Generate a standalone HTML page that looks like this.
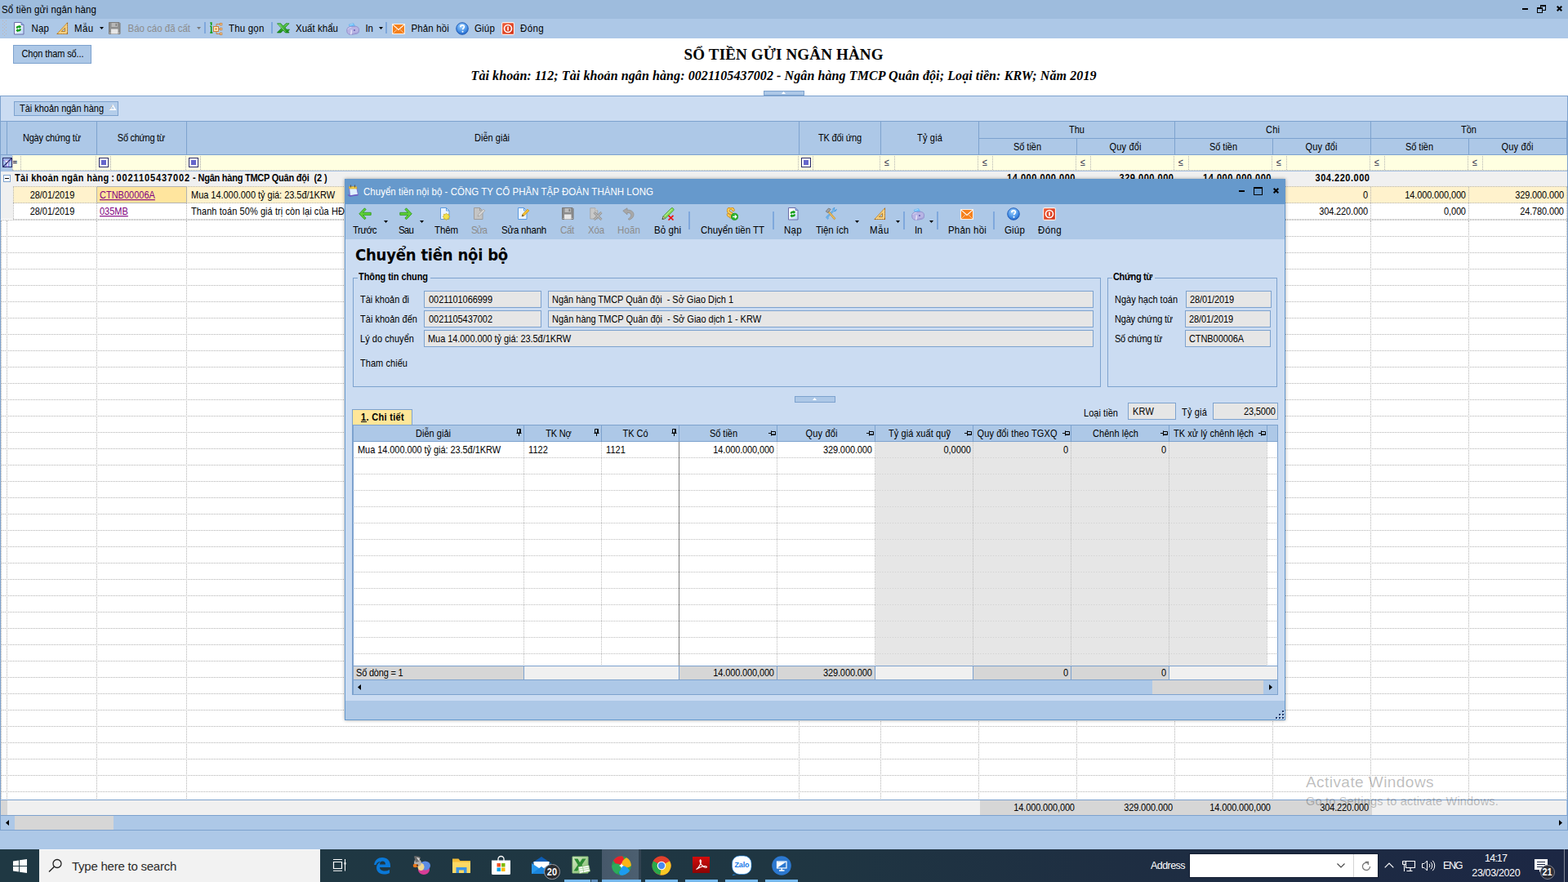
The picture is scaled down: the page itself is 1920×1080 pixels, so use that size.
<!DOCTYPE html>
<html lang="vi"><head><meta charset="utf-8"><title>Sổ tiền gửi ngân hàng</title>
<style>
*{box-sizing:border-box;margin:0;padding:0}
html,body{width:1920px;height:1080px;overflow:hidden}
body{position:relative;background:#fff;font:11px 'Liberation Sans',sans-serif;color:#000}
div,svg,span.a{position:absolute}
.hd{background:repeating-linear-gradient(to right,#b2b2b2 0 1px,transparent 1px 2px);height:1px}
.vd{background:repeating-linear-gradient(to bottom,#b2b2b2 0 1px,transparent 1px 2px);width:1px}
.hl{background:repeating-linear-gradient(to right,#bdbdbd 0 1px,#fff 1px 2px);height:1px}
.vl{background:repeating-linear-gradient(to bottom,#bdbdbd 0 1px,transparent 1px 2px);width:1px}
.m{transform:scaleY(1.12);transform-origin:0 10.8px}
.g{transform:scaleY(1.09);transform-origin:0 12px}
a{color:#800080;text-decoration:underline}
</style></head>
<body>
<div style="left:0px;top:0px;width:1920px;height:23px;background:#9ebcdd;"></div>
<div class="g" style="top:4px;font:11.5px 'Liberation Sans',sans-serif;line-height:16px;height:16px;white-space:pre;left:2px;letter-spacing:0.133px;">Sổ tiền gửi ngân hàng</div>
<div style="left:1864px;top:10px;width:7px;height:2px;background:#000;"></div>
<svg style="left:1882px;top:6px" width="11" height="10" viewBox="0 0 11 10" shape-rendering="crispEdges"><g fill="#000"><rect x="4" y="0" width="7" height="2"/><rect x="10" y="2" width="1" height="5"/><rect x="4" y="2" width="1" height="1"/><rect x="7" y="6" width="4" height="1"/><rect x="0" y="3" width="7" height="2"/><rect x="0" y="5" width="1" height="5"/><rect x="6" y="5" width="1" height="5"/><rect x="0" y="9" width="7" height="1"/></g></svg>
<svg style="left:1906px;top:7px" width="7" height="7" viewBox="0 0 7 7"><path d="M.7 .7l5.600 5.600M6.300 .7L.7 6.300" stroke="#000" stroke-width="2" stroke-linecap="butt"/></svg>
<div style="left:0px;top:23px;width:1920px;height:24px;background:#adc8e7;"></div>
<svg style="left:3px;top:25px" width="6" height="20" viewBox="0 0 6 20"><g fill="#bfb4b0"><rect x="0" y="0" width="1" height="1"/><rect x="4" y="0" width="1" height="1"/><rect x="2" y="2" width="1" height="1"/><rect x="0" y="4" width="1" height="1"/><rect x="4" y="4" width="1" height="1"/><rect x="2" y="6" width="1" height="1"/><rect x="0" y="8" width="1" height="1"/><rect x="4" y="8" width="1" height="1"/><rect x="2" y="10" width="1" height="1"/><rect x="0" y="12" width="1" height="1"/><rect x="4" y="12" width="1" height="1"/><rect x="2" y="14" width="1" height="1"/><rect x="0" y="16" width="1" height="1"/><rect x="4" y="16" width="1" height="1"/><rect x="2" y="18" width="1" height="1"/></g></svg>
<svg style="left:16px;top:27px;" width="14" height="16" viewBox="0 0 14 16"><defs><linearGradient id="rg16_27" x1="0" y1="0" x2="1" y2="1"><stop offset=".3" stop-color="#ffffff"/><stop offset="1" stop-color="#b4d4f8"/></linearGradient></defs><path d="M1.5 .5h8.500l3 3v11.500h-11.500z" fill="url(#rg16_27)" stroke="#6c6ca8"/><path d="M10 .5v3h3" fill="#7ab4f0" stroke="#6c6ca8" stroke-width=".8"/><path d="M3.600 7.400c0-2.200 2-3.300 4-2.800V3.400l2.600 2.300-2.600 2.300V6.800c-1-.2-1.800.2-1.900 1z" fill="#0c9c10"/><path d="M10 8.600c0 2.200-2 3.300-4 2.800v1.200L3.400 10.300 6 8v1.200c1 .2 1.800-.2 1.900-1z" fill="#0c9c10"/></svg>
<div class="g" style="top:27px;font:11.5px 'Liberation Sans',sans-serif;line-height:16px;height:16px;white-space:pre;left:38.5px;letter-spacing:0.13px;">Nạp</div>
<svg style="left:69px;top:27px;" width="15" height="15" viewBox="0 0 15 15"><path d="M13.500 .8v13.700H.8z" fill="#f4cc78" stroke="#c08a30" stroke-width=".9" stroke-linejoin="round"/><path d="M13.500 .8v13.700H.8" fill="none" stroke="#a87228" stroke-width="1.100"/><path d="M10.500 7.200v4.300H6.200z" fill="#adc8e7" stroke="#b07a28" stroke-width=".9"/><path d="M3.500 13v1.500M5.500 13v1.500M7.500 13v1.500M9.500 13v1.500M11.500 13v1.500M12 3.500h1.500M12 5.500h1.500M12 7.500h1.500M12 9.500h1.500M12 11.500h1.500" stroke="#fbe6b0" stroke-width=".8"/></svg>
<div class="g" style="top:27px;font:11.5px 'Liberation Sans',sans-serif;line-height:16px;height:16px;white-space:pre;left:91px;letter-spacing:0.375px;">Mẫu</div>
<svg style="left:122px;top:33px" width="5" height="3" viewBox="0 0 5 3"><path d="M0 0h5L2.5 3z" fill="#000"/></svg>
<svg style="left:133px;top:27px;" width="15" height="15" viewBox="0 0 15 15"><path d="M.5 .5h12.500l1 1v13H.5z" fill="#8e8e8e" stroke="#7a7a7a"/><rect x="3.500" y="1" width="7.500" height="5" fill="#b8b8b8"/><rect x="8.500" y="1.800" width="1.600" height="3.200" fill="#808080"/><rect x="3" y="8.500" width="8.500" height="6" fill="#e6e6e6"/><rect x="1.200" y="13" width="1" height="1" fill="#ddd"/><rect x="12.200" y="13" width="1" height="1" fill="#ddd"/></svg>
<div class="g" style="top:27px;font:11.5px 'Liberation Sans',sans-serif;line-height:16px;height:16px;white-space:pre;left:156.5px;letter-spacing:-0.017px;color:#8c8c8c;">Báo cáo đã cất</div>
<svg style="left:241px;top:33px" width="5" height="3" viewBox="0 0 5 3"><path d="M0 0h5L2.5 3z" fill="#777"/></svg>
<div style="left:250px;top:27px;width:2px;height:14px;background:#7fa8dc;"></div>
<svg style="left:257px;top:27px;" width="16" height="16" viewBox="0 0 16 16"><path d="M.3 1h2.400M1.700 1v3M.3 5.200h1.400M1.700 5v8M.2 13h3.200" stroke="#0c9c10" stroke-width="1.500" fill="none"/><rect x="4.500" y="5.500" width="6" height="6" fill="#fde8b8" stroke="#cc7a30" stroke-width=".9"/><path d="M6.200 8.500h2.600M7.500 7.200v2.600" stroke="#cc7a30" stroke-width=".9"/><path d="M10.500 8.500h2.500M8 5.500V2.500h4.500M8 11.500v3h4.500" stroke="#cc7a30" stroke-width=".9" fill="none"/><rect x="12.400" y="1.400" width="2.400" height="2.400" fill="#fde8b8" stroke="#cc7a30" stroke-width=".8"/><rect x="12.400" y="7.300" width="2.400" height="2.400" fill="#fde8b8" stroke="#cc7a30" stroke-width=".8"/><rect x="12.400" y="13.200" width="2.400" height="2.400" fill="#fde8b8" stroke="#cc7a30" stroke-width=".8"/></svg>
<div class="g" style="top:27px;font:11.5px 'Liberation Sans',sans-serif;line-height:16px;height:16px;white-space:pre;left:280px;letter-spacing:0.185px;">Thu gọn</div>
<div style="left:332px;top:27px;width:2px;height:14px;background:#7fa8dc;"></div>
<svg style="left:339px;top:28px;" width="16" height="13" viewBox="0 0 16 13"><defs><linearGradient id="xg339_28" x1="0" y1="0" x2="0" y2="1"><stop offset="0" stop-color="#6cd45c"/><stop offset="1" stop-color="#148a14"/></linearGradient></defs><path d="M.5 .8h4.300l3 3.300L11 .8h4L10 5.900l2 2.300h3.500l-1.200 1.500h-1.200l2 2.300h-4.600l-2.700-3-3 3H.4l5.300-5.600z" fill="url(#xg339_28)" stroke="#0f7a0f" stroke-width=".7" stroke-linejoin="round"/><path d="M2 1.600l9 9.600" stroke="#b8f0a8" stroke-width=".8" opacity=".8"/></svg>
<div class="g" style="top:27px;font:11.5px 'Liberation Sans',sans-serif;line-height:16px;height:16px;white-space:pre;left:362px;letter-spacing:0.023px;">Xuất khẩu</div>
<svg style="left:424px;top:28px;" width="16" height="15" viewBox="0 0 16 15"><path d="M3.200 2.200L8.600 .4l2.200 3.800-5.800 1.800z" fill="#6cc0f8" stroke="#58a8ec" stroke-width=".5"/><path d="M4.300 2.600l4-1.300" stroke="#b8e4ff" stroke-width=".8"/><path d="M.7 9c0-2.600 2.200-4.300 5-4.500l4.300-.3c3-.2 5.500 1.300 5.500 3.800v2.500c0 1.600-1.600 2.600-3.500 2.900l-5 .9c-2 .3-4.300-.2-5.300-1.500C.9 12 .7 10.500 .7 9z" fill="#b8b4e4" stroke="#8c88c8" stroke-width=".8"/><path d="M6.200 8.500c.2 2 0 4-.5 5.800" stroke="#f0eefc" stroke-width="1.200" fill="none"/><path d="M1.800 8c.8-1.600 2.500-2.500 4.500-2.700" stroke="#dcdaf4" stroke-width="1" fill="none"/><path d="M7 13.500l5-1c1.500-.3 2.700-1 2.700-2.200" stroke="#9c98d4" stroke-width=".9" fill="none"/><circle cx="10" cy="9" r=".9" fill="#5a56a8"/></svg>
<div class="g" style="top:27px;font:11.5px 'Liberation Sans',sans-serif;line-height:16px;height:16px;white-space:pre;left:447.5px;letter-spacing:-0.297px;">In</div>
<svg style="left:464px;top:33px" width="5" height="3" viewBox="0 0 5 3"><path d="M0 0h5L2.5 3z" fill="#000"/></svg>
<div style="left:472px;top:27px;width:2px;height:14px;background:#7fa8dc;"></div>
<svg style="left:480px;top:29px;" width="16" height="13" viewBox="0 0 16 13"><rect x=".5" y=".5" width="15" height="12" fill="#f5801c" stroke="#fdf0e4"/><path d="M1 1.200l7 6.200 7-6.200" stroke="#fff" stroke-width="1.100" fill="none"/><path d="M1 12l5.200-5M15 12L9.800 7" stroke="#fbc89c" stroke-width="1" fill="none"/></svg>
<div class="g" style="top:27px;font:11.5px 'Liberation Sans',sans-serif;line-height:16px;height:16px;white-space:pre;left:503.5px;letter-spacing:0.137px;">Phản hồi</div>
<svg style="left:558px;top:27px;" width="16" height="16" viewBox="0 0 16 16"><defs><radialGradient id="hg558_27" cx=".45" cy=".3" r=".75"><stop offset="0" stop-color="#a4d4ff"/><stop offset=".6" stop-color="#4a94e8"/><stop offset="1" stop-color="#1c5cc0"/></radialGradient></defs><circle cx="8" cy="8" r="7.300" fill="url(#hg558_27)" stroke="#1c58b4" stroke-width=".9"/><path d="M5.800 6.200c0-1.500 1-2.400 2.300-2.400s2.300.8 2.300 2c0 1.600-1.800 1.700-1.800 3.400" stroke="#fff" stroke-width="1.700" fill="none"/><circle cx="8.500" cy="11.700" r="1" fill="#fff"/></svg>
<div class="g" style="top:27px;font:11.5px 'Liberation Sans',sans-serif;line-height:16px;height:16px;white-space:pre;left:581px;letter-spacing:0.176px;">Giúp</div>
<svg style="left:614px;top:27px;" width="16" height="16" viewBox="0 0 16 16"><defs><linearGradient id="cg614_27" x1="0" y1="0" x2="1" y2="1"><stop offset="0" stop-color="#f0603c"/><stop offset="1" stop-color="#d02c10"/></linearGradient></defs><rect x=".6" y=".6" width="14.800" height="14.800" rx="1.500" fill="url(#cg614_27)" stroke="#fdeee8" stroke-width="1.100"/><circle cx="8" cy="8" r="4.500" fill="none" stroke="#fff" stroke-width="1.600"/><rect x="7.200" y="5.600" width="1.600" height="4.800" fill="#fff"/></svg>
<div class="g" style="top:27px;font:11.5px 'Liberation Sans',sans-serif;line-height:16px;height:16px;white-space:pre;left:637px;letter-spacing:0.375px;">Đóng</div>
<div style="left:16px;top:55px;width:96px;height:23px;background:#adc8e7;border:1px solid #7da2ce;"></div>
<div class="m" style="top:59px;font:11px 'Liberation Sans',sans-serif;line-height:14px;height:14px;white-space:pre;left:26.44px;letter-spacing:-0.11px;">Chọn tham số...</div>
<div style="top:56px;font:bold 19px 'Liberation Serif',serif;line-height:22px;height:22px;white-space:pre;left:837.58px;letter-spacing:0.157px;">SỔ TIỀN GỬI NGÂN HÀNG</div>
<div style="top:83px;font:italic bold 16px 'Liberation Serif',serif;line-height:20px;height:20px;white-space:pre;left:576.52px;letter-spacing:0.093px;">Tài khoản: 112; Tài khoản ngân hàng: 0021105437002 - Ngân hàng TMCP Quân đội; Loại tiền: KRW; Năm 2019</div>
<div style="left:935px;top:111px;width:50px;height:6px;background:#adc8e7;border:1px solid #7da2ce;"></div>
<svg style="left:957px;top:112px" width="5" height="3" viewBox="0 0 5 3"><path d="M0 3L2.500 0 5 3z" fill="#fff"/></svg>
<div style="left:0px;top:117px;width:1920px;height:31px;background:#cbdcf2;border-top:1px solid #7da2ce;"></div>
<div style="left:17px;top:124px;width:128px;height:18px;background:#b4cdea;border:1px solid #7da2ce;"></div>
<div class="m" style="top:127px;font:11px 'Liberation Sans',sans-serif;line-height:13px;height:13px;white-space:pre;left:24px;letter-spacing:-0.02px;">Tài khoản ngân hàng</div>
<svg style="left:133px;top:127px" width="10" height="9" viewBox="0 0 10 9"><path d="M5 1.800L8.300 7.200H1.700z" fill="#b9d0ec" stroke="#fff" stroke-width="1.400" stroke-linejoin="miter"/><path d="M1.300 7.200L4.700 1.600" stroke="#9a9a9a" stroke-width=".7" fill="none"/></svg>
<div style="left:0px;top:148px;width:1920px;height:42px;background:#adc8e7;"></div>
<div style="left:0px;top:148px;width:1920px;height:1px;background:#7da2ce;"></div>
<div style="left:0px;top:189px;width:1920px;height:1px;background:#7da2ce;"></div>
<div style="left:8px;top:148px;width:1px;height:42px;background:#7da2ce;"></div>
<div style="left:118px;top:148px;width:1px;height:42px;background:#7da2ce;"></div>
<div style="left:228px;top:148px;width:1px;height:42px;background:#7da2ce;"></div>
<div style="left:978px;top:148px;width:1px;height:42px;background:#7da2ce;"></div>
<div style="left:1078px;top:148px;width:1px;height:42px;background:#7da2ce;"></div>
<div style="left:1198px;top:148px;width:1px;height:42px;background:#7da2ce;"></div>
<div style="left:1438px;top:148px;width:1px;height:42px;background:#7da2ce;"></div>
<div style="left:1678px;top:148px;width:1px;height:42px;background:#7da2ce;"></div>
<div style="left:1918px;top:148px;width:1px;height:42px;background:#7da2ce;"></div>
<div style="left:1318px;top:169px;width:1px;height:21px;background:#7da2ce;"></div>
<div style="left:1558px;top:169px;width:1px;height:21px;background:#7da2ce;"></div>
<div style="left:1798px;top:169px;width:1px;height:21px;background:#7da2ce;"></div>
<div style="left:1198px;top:169px;width:722px;height:1px;background:#7da2ce;"></div>
<div class="m" style="top:162px;font:11px 'Liberation Sans',sans-serif;line-height:14px;height:14px;white-space:pre;left:27.91px;letter-spacing:-0.188px;">Ngày chứng từ</div>
<div class="m" style="top:162px;font:11px 'Liberation Sans',sans-serif;line-height:14px;height:14px;white-space:pre;left:143.86px;letter-spacing:-0.293px;">Số chứng từ</div>
<div class="m" style="top:162px;font:11px 'Liberation Sans',sans-serif;line-height:14px;height:14px;white-space:pre;left:581.01px;letter-spacing:0.021px;">Diễn giải</div>
<div class="m" style="top:162px;font:11px 'Liberation Sans',sans-serif;line-height:14px;height:14px;white-space:pre;left:1001.93px;letter-spacing:-0.145px;">TK đối ứng</div>
<div class="m" style="top:162px;font:11px 'Liberation Sans',sans-serif;line-height:14px;height:14px;white-space:pre;left:1123.09px;letter-spacing:0.172px;">Tỷ giá</div>
<div class="m" style="top:152px;font:11px 'Liberation Sans',sans-serif;line-height:14px;height:14px;white-space:pre;left:1309.01px;letter-spacing:0.01px;">Thu</div>
<div class="m" style="top:152px;font:11px 'Liberation Sans',sans-serif;line-height:14px;height:14px;white-space:pre;left:1550.08px;letter-spacing:0.161px;">Chi</div>
<div class="m" style="top:152px;font:11px 'Liberation Sans',sans-serif;line-height:14px;height:14px;white-space:pre;left:1789.01px;letter-spacing:0.01px;">Tồn</div>
<div class="m" style="top:173px;font:11px 'Liberation Sans',sans-serif;line-height:14px;height:14px;white-space:pre;left:1240.98px;letter-spacing:-0.036px;">Số tiền</div>
<div class="m" style="top:173px;font:11px 'Liberation Sans',sans-serif;line-height:14px;height:14px;white-space:pre;left:1480.98px;letter-spacing:-0.036px;">Số tiền</div>
<div class="m" style="top:173px;font:11px 'Liberation Sans',sans-serif;line-height:14px;height:14px;white-space:pre;left:1720.98px;letter-spacing:-0.036px;">Số tiền</div>
<div class="m" style="top:173px;font:11px 'Liberation Sans',sans-serif;line-height:14px;height:14px;white-space:pre;left:1358.58px;letter-spacing:0.154px;">Quy đổi</div>
<div class="m" style="top:173px;font:11px 'Liberation Sans',sans-serif;line-height:14px;height:14px;white-space:pre;left:1598.58px;letter-spacing:0.154px;">Quy đổi</div>
<div class="m" style="top:173px;font:11px 'Liberation Sans',sans-serif;line-height:14px;height:14px;white-space:pre;left:1838.58px;letter-spacing:0.154px;">Quy đổi</div>
<div style="left:0px;top:190px;width:1920px;height:19px;background:#ffffe1;"></div>
<div style="left:0px;top:190px;width:15px;height:19px;background:#adc8e7;"></div>
<svg style="left:3px;top:193px" width="12" height="12" viewBox="0 0 12 12"><rect x=".5" y=".5" width="11" height="11" fill="#a8c8f0" stroke="#2a2a6a"/><path d="M1.500 3h9L7.300 6.800V11h-2.300V6.800z" fill="#fff" stroke="#7a6ad8" stroke-width=".9"/><path d="M1 11L11 1" stroke="#2a2a6a" stroke-width="1.300"/></svg>
<div style="top:193px;font:bold 9.5px 'Liberation Sans',sans-serif;line-height:12px;height:12px;white-space:pre;left:15.5px;color:#10103a;">=</div>
<div class="vd" style="left:25px;top:191px;height:18px;background-position:0 0px"></div>
<div class="vd" style="left:117px;top:191px;height:18px;background-position:0 0px"></div>
<div class="vd" style="left:135px;top:191px;height:18px;background-position:0 0px"></div>
<div class="vd" style="left:227px;top:191px;height:18px;background-position:0 0px"></div>
<div class="vd" style="left:245px;top:191px;height:18px;background-position:0 0px"></div>
<div class="vd" style="left:977px;top:191px;height:18px;background-position:0 0px"></div>
<div class="vd" style="left:995px;top:191px;height:18px;background-position:0 0px"></div>
<div class="vd" style="left:1077px;top:191px;height:18px;background-position:0 0px"></div>
<div class="vd" style="left:1095px;top:191px;height:18px;background-position:0 0px"></div>
<div class="vd" style="left:1197px;top:191px;height:18px;background-position:0 0px"></div>
<div class="vd" style="left:1215px;top:191px;height:18px;background-position:0 0px"></div>
<div class="vd" style="left:1317px;top:191px;height:18px;background-position:0 0px"></div>
<div class="vd" style="left:1335px;top:191px;height:18px;background-position:0 0px"></div>
<div class="vd" style="left:1437px;top:191px;height:18px;background-position:0 0px"></div>
<div class="vd" style="left:1455px;top:191px;height:18px;background-position:0 0px"></div>
<div class="vd" style="left:1557px;top:191px;height:18px;background-position:0 0px"></div>
<div class="vd" style="left:1575px;top:191px;height:18px;background-position:0 0px"></div>
<div class="vd" style="left:1677px;top:191px;height:18px;background-position:0 0px"></div>
<div class="vd" style="left:1695px;top:191px;height:18px;background-position:0 0px"></div>
<div class="vd" style="left:1797px;top:191px;height:18px;background-position:0 0px"></div>
<div class="vd" style="left:1815px;top:191px;height:18px;background-position:0 0px"></div>
<svg style="left:121px;top:193px" width="12" height="12" viewBox="0 0 12 12"><rect x=".5" y=".5" width="11" height="11" fill="#fff" stroke="#2a2a6a"/><rect x="3" y="3" width="6" height="6" fill="#6666cc"/></svg>
<svg style="left:231px;top:193px" width="12" height="12" viewBox="0 0 12 12"><rect x=".5" y=".5" width="11" height="11" fill="#fff" stroke="#2a2a6a"/><rect x="3" y="3" width="6" height="6" fill="#6666cc"/></svg>
<svg style="left:981px;top:193px" width="12" height="12" viewBox="0 0 12 12"><rect x=".5" y=".5" width="11" height="11" fill="#fff" stroke="#2a2a6a"/><rect x="3" y="3" width="6" height="6" fill="#6666cc"/></svg>
<div class="m" style="top:192px;font:11px 'Liberation Sans',sans-serif;line-height:14px;height:14px;white-space:pre;left:1083px;color:#1a1a3a;">≤</div>
<div class="m" style="top:192px;font:11px 'Liberation Sans',sans-serif;line-height:14px;height:14px;white-space:pre;left:1203px;color:#1a1a3a;">≤</div>
<div class="m" style="top:192px;font:11px 'Liberation Sans',sans-serif;line-height:14px;height:14px;white-space:pre;left:1323px;color:#1a1a3a;">≤</div>
<div class="m" style="top:192px;font:11px 'Liberation Sans',sans-serif;line-height:14px;height:14px;white-space:pre;left:1443px;color:#1a1a3a;">≤</div>
<div class="m" style="top:192px;font:11px 'Liberation Sans',sans-serif;line-height:14px;height:14px;white-space:pre;left:1563px;color:#1a1a3a;">≤</div>
<div class="m" style="top:192px;font:11px 'Liberation Sans',sans-serif;line-height:14px;height:14px;white-space:pre;left:1683px;color:#1a1a3a;">≤</div>
<div class="m" style="top:192px;font:11px 'Liberation Sans',sans-serif;line-height:14px;height:14px;white-space:pre;left:1803px;color:#1a1a3a;">≤</div>
<div class="hd" style="left:15px;top:208px;width:1905px;background-position:1px 0"></div>
<div class="vd" style="left:15px;top:191px;height:18px;background-position:0 0px"></div>
<div style="left:0px;top:209px;width:1920px;height:1px;background:#a9c1e2;"></div>
<div style="left:0px;top:210px;width:1920px;height:870px;background:#fff;"></div>
<div style="left:0px;top:210px;width:1920px;height:18px;background:#f0f0f0;"></div>
<div style="left:0px;top:228px;width:16px;height:40px;background:#f0f0f0;"></div>
<svg style="left:4px;top:214px" width="9" height="9" viewBox="0 0 9 9"><rect x=".5" y=".5" width="8" height="8" fill="#fff" stroke="#7da2ce"/><path d="M2 4.500h5" stroke="#000"/></svg>
<div style="left:18px;top:211px;font:bold 11px 'Liberation Sans',sans-serif;line-height:14px;height:14px;white-space:pre;transform:scaleY(1.12);transform-origin:0 10.8px;"><span style="letter-spacing:0.294px">Tài khoản ngân hàng</span><span style="letter-spacing:-0.294px"> : </span><span style="letter-spacing:0.889px">0021105437002</span><span style="letter-spacing:-0.094px"> - </span><span style="letter-spacing:-0.243px">Ngân hàng TMCP Quân đội</span><span style="letter-spacing:-0.062px">  </span><span style="letter-spacing:-0.125px">(2 )</span></div>
<div class="m" style="top:211px;font:bold 11px 'Liberation Sans',sans-serif;line-height:14px;height:14px;white-space:pre;left:1233.04px;letter-spacing:0.538px;">14.000.000,000</div>
<div class="m" style="top:211px;font:bold 11px 'Liberation Sans',sans-serif;line-height:14px;height:14px;white-space:pre;left:1370.53px;letter-spacing:0.53px;">329.000.000</div>
<div class="m" style="top:211px;font:bold 11px 'Liberation Sans',sans-serif;line-height:14px;height:14px;white-space:pre;left:1473.04px;letter-spacing:0.538px;">14.000.000,000</div>
<div class="m" style="top:211px;font:bold 11px 'Liberation Sans',sans-serif;line-height:14px;height:14px;white-space:pre;left:1610.53px;letter-spacing:0.53px;">304.220.000</div>
<div style="left:16px;top:228px;width:1904px;height:21px;background:#fff2cc;"></div>
<div style="left:118px;top:228px;width:111px;height:21px;background:#ffe59e;border:1px solid #b4b4b4;"></div>
<div class="hd" style="left:16px;top:228px;width:1904px;background-position:0px 0"></div>
<div class="hd" style="left:16px;top:248px;width:1904px;background-position:0px 0"></div>
<div class="hd" style="left:16px;top:268px;width:1904px;background-position:0px 0"></div>
<div class="vd" style="left:16px;top:228px;height:41px;background-position:0 1px"></div>
<div class="vd" style="left:118px;top:228px;height:41px;background-position:0 1px"></div>
<div class="vd" style="left:228px;top:228px;height:41px;background-position:0 1px"></div>
<div class="vd" style="left:978px;top:228px;height:41px;background-position:0 1px"></div>
<div class="vd" style="left:1078px;top:228px;height:41px;background-position:0 1px"></div>
<div class="vd" style="left:1198px;top:228px;height:41px;background-position:0 1px"></div>
<div class="vd" style="left:1318px;top:228px;height:41px;background-position:0 1px"></div>
<div class="vd" style="left:1438px;top:228px;height:41px;background-position:0 1px"></div>
<div class="vd" style="left:1558px;top:228px;height:41px;background-position:0 1px"></div>
<div class="vd" style="left:1678px;top:228px;height:41px;background-position:0 1px"></div>
<div class="vd" style="left:1798px;top:228px;height:41px;background-position:0 1px"></div>
<div class="vd" style="left:1918px;top:228px;height:41px;background-position:0 1px"></div>
<div class="hd" style="left:1px;top:269px;width:1918px;background-position:1px 0"></div>
<div class="hd" style="left:1px;top:289px;width:1918px;background-position:1px 0"></div>
<div class="hd" style="left:1px;top:309px;width:1918px;background-position:1px 0"></div>
<div class="hd" style="left:1px;top:329px;width:1918px;background-position:1px 0"></div>
<div class="hd" style="left:1px;top:349px;width:1918px;background-position:1px 0"></div>
<div class="hd" style="left:1px;top:369px;width:1918px;background-position:1px 0"></div>
<div class="hd" style="left:1px;top:389px;width:1918px;background-position:1px 0"></div>
<div class="hd" style="left:1px;top:409px;width:1918px;background-position:1px 0"></div>
<div class="hd" style="left:1px;top:429px;width:1918px;background-position:1px 0"></div>
<div class="hd" style="left:1px;top:449px;width:1918px;background-position:1px 0"></div>
<div class="hd" style="left:1px;top:469px;width:1918px;background-position:1px 0"></div>
<div class="hd" style="left:1px;top:489px;width:1918px;background-position:1px 0"></div>
<div class="hd" style="left:1px;top:509px;width:1918px;background-position:1px 0"></div>
<div class="hd" style="left:1px;top:529px;width:1918px;background-position:1px 0"></div>
<div class="hd" style="left:1px;top:549px;width:1918px;background-position:1px 0"></div>
<div class="hd" style="left:1px;top:569px;width:1918px;background-position:1px 0"></div>
<div class="hd" style="left:1px;top:589px;width:1918px;background-position:1px 0"></div>
<div class="hd" style="left:1px;top:609px;width:1918px;background-position:1px 0"></div>
<div class="hd" style="left:1px;top:629px;width:1918px;background-position:1px 0"></div>
<div class="hd" style="left:1px;top:649px;width:1918px;background-position:1px 0"></div>
<div class="hd" style="left:1px;top:669px;width:1918px;background-position:1px 0"></div>
<div class="hd" style="left:1px;top:689px;width:1918px;background-position:1px 0"></div>
<div class="hd" style="left:1px;top:709px;width:1918px;background-position:1px 0"></div>
<div class="hd" style="left:1px;top:729px;width:1918px;background-position:1px 0"></div>
<div class="hd" style="left:1px;top:749px;width:1918px;background-position:1px 0"></div>
<div class="hd" style="left:1px;top:769px;width:1918px;background-position:1px 0"></div>
<div class="hd" style="left:1px;top:789px;width:1918px;background-position:1px 0"></div>
<div class="hd" style="left:1px;top:809px;width:1918px;background-position:1px 0"></div>
<div class="hd" style="left:1px;top:829px;width:1918px;background-position:1px 0"></div>
<div class="hd" style="left:1px;top:849px;width:1918px;background-position:1px 0"></div>
<div class="hd" style="left:1px;top:869px;width:1918px;background-position:1px 0"></div>
<div class="hd" style="left:1px;top:889px;width:1918px;background-position:1px 0"></div>
<div class="hd" style="left:1px;top:909px;width:1918px;background-position:1px 0"></div>
<div class="hd" style="left:1px;top:929px;width:1918px;background-position:1px 0"></div>
<div class="hd" style="left:1px;top:949px;width:1918px;background-position:1px 0"></div>
<div class="hd" style="left:1px;top:969px;width:1918px;background-position:1px 0"></div>
<div class="vd" style="left:1px;top:270px;height:709px;background-position:0 1px"></div>
<div class="vd" style="left:8px;top:270px;height:709px;background-position:0 1px"></div>
<div class="vd" style="left:118px;top:270px;height:709px;background-position:0 1px"></div>
<div class="vd" style="left:228px;top:270px;height:709px;background-position:0 1px"></div>
<div class="vd" style="left:978px;top:270px;height:709px;background-position:0 1px"></div>
<div class="vd" style="left:1078px;top:270px;height:709px;background-position:0 1px"></div>
<div class="vd" style="left:1198px;top:270px;height:709px;background-position:0 1px"></div>
<div class="vd" style="left:1318px;top:270px;height:709px;background-position:0 1px"></div>
<div class="vd" style="left:1438px;top:270px;height:709px;background-position:0 1px"></div>
<div class="vd" style="left:1558px;top:270px;height:709px;background-position:0 1px"></div>
<div class="vd" style="left:1678px;top:270px;height:709px;background-position:0 1px"></div>
<div class="vd" style="left:1798px;top:270px;height:709px;background-position:0 1px"></div>
<div class="vd" style="left:1918px;top:270px;height:709px;background-position:0 1px"></div>
<div class="m" style="top:232px;font:11px 'Liberation Sans',sans-serif;line-height:14px;height:14px;white-space:pre;left:36.72px;letter-spacing:-0.056px;">28/01/2019</div>
<a class="m" style="position:absolute;left:122px;top:232px;line-height:14px;height:14px;white-space:pre;letter-spacing:0px">CTNB00006A</a>
<div class="m" style="top:232px;font:11px 'Liberation Sans',sans-serif;line-height:14px;height:14px;white-space:pre;left:234px;letter-spacing:-0.035px;">Mua 14.000.000 tỷ giá: 23.5đ/1KRW</div>
<div class="m" style="top:232px;font:11px 'Liberation Sans',sans-serif;line-height:14px;height:14px;white-space:pre;left:1668.88px;">0</div>
<div class="m" style="top:232px;font:11px 'Liberation Sans',sans-serif;line-height:14px;height:14px;white-space:pre;left:1720.31px;letter-spacing:-0.137px;">14.000.000,000</div>
<div class="m" style="top:232px;font:11px 'Liberation Sans',sans-serif;line-height:14px;height:14px;white-space:pre;left:1855.22px;letter-spacing:-0.139px;">329.000.000</div>
<div class="m" style="top:252px;font:11px 'Liberation Sans',sans-serif;line-height:14px;height:14px;white-space:pre;left:36.72px;letter-spacing:-0.056px;">28/01/2019</div>
<a class="m" style="position:absolute;left:122px;top:252px;line-height:14px;height:14px;white-space:pre;letter-spacing:0px">035MB</a>
<div class="m" style="top:252px;font:11px 'Liberation Sans',sans-serif;line-height:14px;height:14px;white-space:pre;left:234px;letter-spacing:0.073px;">Thanh toán 50% giá trị còn lại của HĐ</div>
<div class="m" style="top:252px;font:11px 'Liberation Sans',sans-serif;line-height:14px;height:14px;white-space:pre;left:1615.22px;letter-spacing:-0.139px;">304.220.000</div>
<div class="m" style="top:252px;font:11px 'Liberation Sans',sans-serif;line-height:14px;height:14px;white-space:pre;left:1768.02px;letter-spacing:-0.138px;">0,000</div>
<div class="m" style="top:252px;font:11px 'Liberation Sans',sans-serif;line-height:14px;height:14px;white-space:pre;left:1861.18px;letter-spacing:-0.138px;">24.780.000</div>
<div style="left:0px;top:979px;width:1920px;height:20px;background:#f0f0f0;border:1px solid #7da2ce;"></div>
<div style="left:1px;top:980px;width:8px;height:18px;background:#d6d6d6;"></div>
<div style="left:1200px;top:980px;width:480px;height:18px;background:#d6d6d6;"></div>
<div style="left:1918px;top:980px;width:1px;height:18px;background:#adc8e7;"></div>
<div class="m" style="top:982px;font:11px 'Liberation Sans',sans-serif;line-height:14px;height:14px;white-space:pre;left:1241.31px;letter-spacing:-0.137px;">14.000.000,000</div>
<div class="m" style="top:982px;font:11px 'Liberation Sans',sans-serif;line-height:14px;height:14px;white-space:pre;left:1376.22px;letter-spacing:-0.139px;">329.000.000</div>
<div class="m" style="top:982px;font:11px 'Liberation Sans',sans-serif;line-height:14px;height:14px;white-space:pre;left:1481.31px;letter-spacing:-0.137px;">14.000.000,000</div>
<div class="m" style="top:982px;font:11px 'Liberation Sans',sans-serif;line-height:14px;height:14px;white-space:pre;left:1616.22px;letter-spacing:-0.139px;">304.220.000</div>
<div style="left:0px;top:999px;width:1920px;height:18px;background:#adc8e7;border:1px solid #7da2ce;border-top:0;"></div>
<div style="left:18px;top:999px;width:121px;height:17px;background:#d6d6d6;"></div>
<svg style="left:7px;top:1004px" width="4" height="7" viewBox="0 0 4 7"><path d="M4 0v7L0 3.5z" fill="#000"/></svg>
<svg style="left:1909px;top:1004px" width="4" height="7" viewBox="0 0 4 7"><path d="M0 0v7l4-3.5z" fill="#000"/></svg>
<div style="left:0px;top:1017px;width:1920px;height:23px;background:#adc8e7;"></div>
<div style="left:0px;top:117px;width:1px;height:900px;background:#7da2ce;"></div>
<div style="left:1919px;top:117px;width:1px;height:900px;background:#7da2ce;"></div>
<div style="top:946px;font:19px 'Liberation Sans',sans-serif;line-height:24px;height:24px;white-space:pre;left:1599px;letter-spacing:0.44px;color:rgba(0,0,0,.27);">Activate Windows</div>
<div style="top:972px;font:14.5px 'Liberation Sans',sans-serif;line-height:18px;height:18px;white-space:pre;left:1599px;letter-spacing:0.203px;color:rgba(0,0,0,.25);">Go to Settings to activate Windows.</div>
<div style="left:422px;top:219px;width:1152px;height:663px;background:#cbdcf2;box-shadow:0 0 4px rgba(0,0,0,.35);"></div>
<div style="left:422px;top:219px;width:1152px;height:31px;background:#6699cc;"></div>
<div style="left:422px;top:219px;width:1px;height:663px;background:#6699cc;"></div>
<div style="left:1573px;top:219px;width:1px;height:663px;background:#6699cc;"></div>
<div style="left:422px;top:881px;width:1152px;height:1px;background:#6699cc;"></div>
<svg style="left:425px;top:225px;" width="14" height="16" viewBox="0 0 14 16"><path d="M2.500 3.500h9l2 10-10 1.500z" fill="#dff0ff" stroke="#7a6ac8" stroke-width=".9"/><path d="M2.500 3.500h9l.5 2.500H2.700z" fill="#f4d24a" stroke="#c8a020" stroke-width=".6"/><path d="M1 13.500l2.500 1.500 10-1.500" fill="none" stroke="#6a5ac0" stroke-width="1.400"/><path d="M4.500 1.500v3M9.500 1.500v3" stroke="#555" stroke-width="1.100"/></svg>
<div class="g" style="top:227px;font:11.5px 'Liberation Sans',sans-serif;line-height:16px;height:16px;white-space:pre;left:445px;letter-spacing:0.024px;color:#fff;">Chuyển tiền nội bộ - CÔNG TY CỔ PHẦN TẬP ĐOÀN THÀNH LONG</div>
<div style="left:1517px;top:233px;width:7px;height:2px;background:#000;"></div>
<svg style="left:1535px;top:229px" width="11" height="10" viewBox="0 0 11 10" shape-rendering="crispEdges"><g fill="#000"><rect x="0" y="0" width="11" height="2"/><rect x="0" y="2" width="1" height="8"/><rect x="10" y="2" width="1" height="8"/><rect x="0" y="9" width="11" height="1"/></g></svg>
<svg style="left:1559px;top:230px" width="7" height="7" viewBox="0 0 7 7"><path d="M.7 .7l5.600 5.600M6.300 .7L.7 6.300" stroke="#000" stroke-width="2" stroke-linecap="butt"/></svg>
<div style="left:423px;top:250px;width:1150px;height:43px;background:#adc8e7;"></div>
<svg style="left:439px;top:254px;" width="16" height="16" viewBox="0 0 16 16"><path d="M7.500 .8L.8 7.800l6.700 7 1.600-1.800-3.700-3.700h9.800v-3H5.400l3.700-3.700z" fill="#5fd03a" stroke="#2f9a1a" stroke-width=".9" stroke-linejoin="round"/></svg>
<div class="g" style="top:274px;font:11.5px 'Liberation Sans',sans-serif;line-height:16px;height:16px;white-space:pre;left:432px;letter-spacing:-0.484px;">Trước</div>
<svg style="left:470px;top:270px" width="5" height="3" viewBox="0 0 5 3"><path d="M0 0h5L2.5 3z" fill="#000"/></svg>
<svg style="left:489px;top:254px;" width="16" height="16" viewBox="0 0 16 16"><path d="M8.500 .8l6.700 7-6.700 7-1.600-1.800 3.700-3.700H.8v-3h9.800L6.900 2.600z" fill="#5fd03a" stroke="#2f9a1a" stroke-width=".9" stroke-linejoin="round"/></svg>
<div class="g" style="top:274px;font:11.5px 'Liberation Sans',sans-serif;line-height:16px;height:16px;white-space:pre;left:488px;letter-spacing:-0.823px;">Sau</div>
<svg style="left:514px;top:270px" width="5" height="3" viewBox="0 0 5 3"><path d="M0 0h5L2.5 3z" fill="#000"/></svg>
<svg style="left:538px;top:254px;" width="16" height="16" viewBox="0 0 16 16"><path d="M1.5 .5h7l3.500 3.500v10.500h-10.500z" fill="#eaf3ff" stroke="#5a9ae0"/><path d="M8.500 .5v3.500h3.500" fill="none" stroke="#5a9ae0"/><path d="M8.500 7l1.200 1.700 2-.5-.4 2 1.700 1.100-1.700 1.100.4 2-2-.5L8.500 15.600 7.300 13.900l-2 .5.4-2L4 11.300l1.700-1.100-.4-2 2 .5z" fill="#f2e24a" stroke="#c8a820" stroke-width=".7"/></svg>
<div class="g" style="top:274px;font:11.5px 'Liberation Sans',sans-serif;line-height:16px;height:16px;white-space:pre;left:532px;letter-spacing:-0.102px;">Thêm</div>
<svg style="left:579px;top:254px;" width="16" height="16" viewBox="0 0 16 16"><path d="M1.5 .5h7l3.500 3.500v10.500h-10.500z" fill="#c4c4c4" stroke="#9c9c9c"/><path d="M8.500 .5v3.500h3.500" fill="none" stroke="#9c9c9c"/><path d="M6 11l.8-2.600 6.200-6.200 1.800 1.800-6.200 6.200z" fill="#d8d8d8" stroke="#a0a0a0" stroke-width=".8"/></svg>
<div class="g" style="top:274px;font:11.5px 'Liberation Sans',sans-serif;line-height:16px;height:16px;white-space:pre;left:577px;letter-spacing:-0.922px;color:#8c8c8c;">Sửa</div>
<svg style="left:633px;top:254px;" width="16" height="16" viewBox="0 0 16 16"><path d="M1.5 .5h7l3.500 3.500v10.500h-10.500z" fill="#eaf3ff" stroke="#5a9ae0"/><path d="M8.500 .5v3.500h3.500" fill="none" stroke="#5a9ae0"/><path d="M6 11l.8-2.600 6.200-6.200 1.800 1.800-6.200 6.200z" fill="#f6c432" stroke="#c8901a" stroke-width=".8"/><path d="M6 11l.8-2.600 1.800 1.800z" fill="#5a4a3a"/></svg>
<div class="g" style="top:274px;font:11.5px 'Liberation Sans',sans-serif;line-height:16px;height:16px;white-space:pre;left:614px;letter-spacing:-0.217px;">Sửa nhanh</div>
<svg style="left:688px;top:254px;" width="15" height="15" viewBox="0 0 15 15"><path d="M.5 .5h12.500l1 1v13H.5z" fill="#8c8c8c" stroke="#787878"/><rect x="3.500" y="1" width="7.500" height="5" fill="#bcbcbc"/><rect x="8.500" y="1.800" width="1.600" height="3.200" fill="#7c7c7c"/><rect x="3" y="8.500" width="8.500" height="6" fill="#e8e8e8"/><rect x="1.200" y="13" width="1" height="1" fill="#ddd"/><rect x="12.200" y="13" width="1" height="1" fill="#ddd"/></svg>
<div class="g" style="top:274px;font:11.5px 'Liberation Sans',sans-serif;line-height:16px;height:16px;white-space:pre;left:686px;letter-spacing:-0.302px;color:#8c8c8c;">Cất</div>
<svg style="left:722px;top:254px;" width="16" height="16" viewBox="0 0 16 16"><path d="M.8 .8h6l3 3V14H.8z" fill="#c8c8c8" stroke="#a4a4a4" stroke-width=".9"/><path d="M6.800 .8v3h3" fill="#dcdcdc" stroke="#a4a4a4" stroke-width=".8"/><path d="M5.500 6l9 9M14.500 6l-9 9" stroke="#8c8c8c" stroke-width="2.800"/><path d="M5.500 6l9 9M14.500 6l-9 9" stroke="#b8b8b8" stroke-width="1.400"/></svg>
<div class="g" style="top:274px;font:11.5px 'Liberation Sans',sans-serif;line-height:16px;height:16px;white-space:pre;left:720px;letter-spacing:-0.156px;color:#8c8c8c;">Xóa</div>
<svg style="left:762px;top:254px;" width="15" height="16" viewBox="0 0 15 16"><path d="M.8 4.200L6 .8v2.400c4.500-.4 8 1.800 8 5.600 0 3-2.400 5.200-5.400 6.400-.8-.2-1.200-.6-1.400-1.200 2-1 3.400-2.600 3.400-4.600 0-2-1.600-3.200-4.600-3v2.400z" fill="#a8a8a8" stroke="#909090" stroke-width=".8" stroke-linejoin="round"/></svg>
<div class="g" style="top:274px;font:11.5px 'Liberation Sans',sans-serif;line-height:16px;height:16px;white-space:pre;left:756px;letter-spacing:0.125px;color:#8c8c8c;">Hoãn</div>
<svg style="left:810px;top:254px;" width="16" height="16" viewBox="0 0 16 16"><path d="M1 14.500l1.200-3.800L12 .9c.6-.6 1.500-.5 2.100.1l.6.700c.5.600.5 1.400-.1 2L4.800 13.500z" fill="#8cdc5c" stroke="#3c9c24" stroke-width=".9" stroke-linejoin="round"/><path d="M3.200 11.200l9-9" stroke="#c4f4a4" stroke-width="1"/><path d="M1 14.500l1.200-3.800 2.600 2.800z" fill="#e8d4a8" stroke="#5c5c3c" stroke-width=".7"/><path d="M1 14.500l.5-1.500 1 1z" fill="#222"/><path d="M8.500 9.800l6 5.700M14.500 9.800l-6 5.700" stroke="#f01010" stroke-width="1.700"/></svg>
<div class="g" style="top:274px;font:11.5px 'Liberation Sans',sans-serif;line-height:16px;height:16px;white-space:pre;left:801px;letter-spacing:0.065px;">Bỏ ghi</div>
<div style="left:843px;top:259px;width:2px;height:22px;background:#7fa8dc;"></div>
<svg style="left:889px;top:254px;" width="15" height="16" viewBox="0 0 15 16"><path d="M9 3.200C8.300 1.600 6.800 1 5.300 1.200 3.500 1.500 2.400 2.800 2.600 4.300c.2 1.500 1.500 2.100 3 2.600 1.300.4 2 1 2 2 0 1.100-.9 1.800-2.200 1.800S3 10 2.500 8.800" fill="none" stroke="#c88414" stroke-width="3.400" stroke-linecap="round"/><path d="M9 3.200C8.300 1.600 6.800 1 5.300 1.200 3.500 1.500 2.400 2.800 2.600 4.300c.2 1.500 1.500 2.100 3 2.600 1.300.4 2 1 2 2 0 1.100-.9 1.800-2.200 1.800S3 10 2.500 8.800" fill="none" stroke="#fbd05c" stroke-width="2" stroke-linecap="round"/><path d="M5.500 0v2M5.500 11v2.500" stroke="#c88414" stroke-width="1.800"/><path d="M5.500 .3v1.500M5.500 11.300v1.800" stroke="#fbd05c" stroke-width=".9"/><circle cx="10.500" cy="11.300" r="4.100" fill="#2cb42c" stroke="#158a15" stroke-width=".7"/><path d="M8.200 11.300h4M10.800 9.400l1.900 1.900-1.900 1.900" stroke="#fff" stroke-width="1.300" fill="none"/></svg>
<div class="g" style="top:274px;font:11.5px 'Liberation Sans',sans-serif;line-height:16px;height:16px;white-space:pre;left:858px;letter-spacing:-0.03px;">Chuyển tiền TT</div>
<div style="left:946px;top:259px;width:2px;height:22px;background:#7fa8dc;"></div>
<svg style="left:964px;top:254px;" width="14" height="16" viewBox="0 0 14 16"><defs><linearGradient id="rg964_254" x1="0" y1="0" x2="1" y2="1"><stop offset=".3" stop-color="#ffffff"/><stop offset="1" stop-color="#b4d4f8"/></linearGradient></defs><path d="M1.5 .5h8.500l3 3v11.500h-11.500z" fill="url(#rg964_254)" stroke="#6c6ca8"/><path d="M10 .5v3h3" fill="#7ab4f0" stroke="#6c6ca8" stroke-width=".8"/><path d="M3.600 7.400c0-2.200 2-3.300 4-2.800V3.400l2.600 2.300-2.600 2.300V6.800c-1-.2-1.800.2-1.900 1z" fill="#0c9c10"/><path d="M10 8.600c0 2.200-2 3.300-4 2.800v1.200L3.400 10.300 6 8v1.200c1 .2 1.800-.2 1.900-1z" fill="#0c9c10"/></svg>
<div class="g" style="top:274px;font:11.5px 'Liberation Sans',sans-serif;line-height:16px;height:16px;white-space:pre;left:960px;letter-spacing:0.297px;">Nạp</div>
<svg style="left:1010px;top:254px;" width="16" height="16" viewBox="0 0 16 16"><path d="M2.500 13.500c-.8-.8-.8-1.700 0-2.500L10 3.500c-.5-1.500.3-3 2-3.300l-1 1.800 1.500 1.500 1.800-1c-.3 1.700-1.800 2.500-3.300 2L3.500 12c.8.800.8 1.700 0 2.500" fill="#8cc8f4" stroke="#3c94dc" stroke-width=".9" stroke-linejoin="round"/><path d="M5.500 5l7.500 8.500-1.500 1.300L4.200 6.200z" fill="#f0c060" stroke="#b8882c" stroke-width=".7"/><path d="M1.200 4.800L4.600 1l2.600 1.300L3.600 6.400z" fill="#a4a4a4" stroke="#6c6c6c" stroke-width=".8" stroke-linejoin="round"/></svg>
<div class="g" style="top:274px;font:11.5px 'Liberation Sans',sans-serif;line-height:16px;height:16px;white-space:pre;left:999px;letter-spacing:-0.061px;">Tiện ích</div>
<svg style="left:1047px;top:270px" width="5" height="3" viewBox="0 0 5 3"><path d="M0 0h5L2.5 3z" fill="#000"/></svg>
<svg style="left:1070px;top:254px;" width="15" height="15" viewBox="0 0 15 15"><path d="M13.500 .8v13.700H.8z" fill="#f4cc78" stroke="#c08a30" stroke-width=".9" stroke-linejoin="round"/><path d="M13.500 .8v13.700H.8" fill="none" stroke="#a87228" stroke-width="1.100"/><path d="M10.500 7.200v4.300H6.200z" fill="#adc8e7" stroke="#b07a28" stroke-width=".9"/><path d="M3.500 13v1.500M5.500 13v1.500M7.500 13v1.500M9.500 13v1.500M11.500 13v1.500M12 3.500h1.500M12 5.500h1.500M12 7.500h1.500M12 9.500h1.500M12 11.500h1.500" stroke="#fbe6b0" stroke-width=".8"/></svg>
<div class="g" style="top:274px;font:11.5px 'Liberation Sans',sans-serif;line-height:16px;height:16px;white-space:pre;left:1065px;letter-spacing:0.542px;">Mẫu</div>
<svg style="left:1097px;top:270px" width="5" height="3" viewBox="0 0 5 3"><path d="M0 0h5L2.5 3z" fill="#000"/></svg>
<div style="left:1106px;top:259px;width:2px;height:22px;background:#7fa8dc;"></div>
<svg style="left:1116px;top:255px;" width="16" height="15" viewBox="0 0 16 15"><path d="M3.200 2.200L8.600 .4l2.200 3.800-5.800 1.800z" fill="#6cc0f8" stroke="#58a8ec" stroke-width=".5"/><path d="M4.300 2.600l4-1.300" stroke="#b8e4ff" stroke-width=".8"/><path d="M.7 9c0-2.600 2.200-4.300 5-4.500l4.300-.3c3-.2 5.500 1.300 5.500 3.800v2.500c0 1.600-1.600 2.600-3.500 2.900l-5 .9c-2 .3-4.300-.2-5.300-1.500C.9 12 .7 10.500 .7 9z" fill="#b8b4e4" stroke="#8c88c8" stroke-width=".8"/><path d="M6.200 8.500c.2 2 0 4-.5 5.800" stroke="#f0eefc" stroke-width="1.200" fill="none"/><path d="M1.800 8c.8-1.600 2.500-2.500 4.500-2.700" stroke="#dcdaf4" stroke-width="1" fill="none"/><path d="M7 13.500l5-1c1.500-.3 2.700-1 2.700-2.200" stroke="#9c98d4" stroke-width=".9" fill="none"/><circle cx="10" cy="9" r=".9" fill="#5a56a8"/></svg>
<div class="g" style="top:274px;font:11.5px 'Liberation Sans',sans-serif;line-height:16px;height:16px;white-space:pre;left:1120px;letter-spacing:-0.297px;">In</div>
<svg style="left:1138px;top:270px" width="5" height="3" viewBox="0 0 5 3"><path d="M0 0h5L2.5 3z" fill="#000"/></svg>
<div style="left:1147px;top:259px;width:2px;height:22px;background:#7fa8dc;"></div>
<svg style="left:1176px;top:256px;" width="16" height="13" viewBox="0 0 16 13"><rect x=".5" y=".5" width="15" height="12" fill="#f5801c" stroke="#fdf0e4"/><path d="M1 1.200l7 6.200 7-6.200" stroke="#fff" stroke-width="1.100" fill="none"/><path d="M1 12l5.200-5M15 12L9.800 7" stroke="#fbc89c" stroke-width="1" fill="none"/></svg>
<div class="g" style="top:274px;font:11.5px 'Liberation Sans',sans-serif;line-height:16px;height:16px;white-space:pre;left:1161px;letter-spacing:0.199px;">Phản hồi</div>
<div style="left:1216px;top:259px;width:2px;height:22px;background:#7fa8dc;"></div>
<svg style="left:1233px;top:254px;" width="16" height="16" viewBox="0 0 16 16"><defs><radialGradient id="hg1233_254" cx=".45" cy=".3" r=".75"><stop offset="0" stop-color="#a4d4ff"/><stop offset=".6" stop-color="#4a94e8"/><stop offset="1" stop-color="#1c5cc0"/></radialGradient></defs><circle cx="8" cy="8" r="7.300" fill="url(#hg1233_254)" stroke="#1c58b4" stroke-width=".9"/><path d="M5.800 6.200c0-1.500 1-2.400 2.300-2.400s2.300.8 2.300 2c0 1.600-1.800 1.700-1.800 3.400" stroke="#fff" stroke-width="1.700" fill="none"/><circle cx="8.500" cy="11.700" r="1" fill="#fff"/></svg>
<div class="g" style="top:274px;font:11.5px 'Liberation Sans',sans-serif;line-height:16px;height:16px;white-space:pre;left:1230px;letter-spacing:0.176px;">Giúp</div>
<svg style="left:1277px;top:254px;" width="16" height="16" viewBox="0 0 16 16"><defs><linearGradient id="cg1277_254" x1="0" y1="0" x2="1" y2="1"><stop offset="0" stop-color="#f0603c"/><stop offset="1" stop-color="#d02c10"/></linearGradient></defs><rect x=".6" y=".6" width="14.800" height="14.800" rx="1.500" fill="url(#cg1277_254)" stroke="#fdeee8" stroke-width="1.100"/><circle cx="8" cy="8" r="4.500" fill="none" stroke="#fff" stroke-width="1.600"/><rect x="7.200" y="5.600" width="1.600" height="4.800" fill="#fff"/></svg>
<div class="g" style="top:274px;font:11.5px 'Liberation Sans',sans-serif;line-height:16px;height:16px;white-space:pre;left:1271px;letter-spacing:0.375px;">Đóng</div>
<div style="top:298px;font:bold 20px 'DejaVu Sans Condensed','DejaVu Sans','Liberation Sans',sans-serif;line-height:28px;height:28px;white-space:pre;left:435px;letter-spacing:-0.207px;">Chuyển tiền nội bộ</div>
<div style="left:432px;top:340px;width:916px;height:134px;border:1px solid #7da2ce;"></div>
<div style="left:438px;top:334px;width:89px;height:12px;background:#cbdcf2;"></div>
<div class="m" style="top:332px;font:bold 11px 'Liberation Sans',sans-serif;line-height:14px;height:14px;white-space:pre;left:439px;letter-spacing:-0.077px;">Thông tin chung</div>
<div style="left:1356px;top:340px;width:208px;height:134px;border:1px solid #7da2ce;"></div>
<div style="left:1362px;top:334px;width:52px;height:12px;background:#cbdcf2;"></div>
<div class="m" style="top:332px;font:bold 11px 'Liberation Sans',sans-serif;line-height:14px;height:14px;white-space:pre;left:1363px;letter-spacing:-0.346px;">Chứng từ</div>
<div class="m" style="top:360px;font:11px 'Liberation Sans',sans-serif;line-height:14px;height:14px;white-space:pre;left:441px;letter-spacing:0.005px;">Tài khoản đi</div>
<div class="m" style="top:384px;font:11px 'Liberation Sans',sans-serif;line-height:14px;height:14px;white-space:pre;left:441px;letter-spacing:0.022px;">Tài khoản đến</div>
<div class="m" style="top:408px;font:11px 'Liberation Sans',sans-serif;line-height:14px;height:14px;white-space:pre;left:441px;letter-spacing:0.047px;">Lý do chuyển</div>
<div class="m" style="top:438px;font:11px 'Liberation Sans',sans-serif;line-height:14px;height:14px;white-space:pre;left:441px;letter-spacing:0.052px;">Tham chiếu</div>
<div style="left:519px;top:356px;width:144px;height:21px;background:#e6e6e6;border:1px solid #7da2ce;"></div>
<div class="m" style="top:360px;font:11px 'Liberation Sans',sans-serif;line-height:14px;height:14px;white-space:pre;left:525px;letter-spacing:-0.055px;">0021101066999</div>
<div style="left:519px;top:380px;width:144px;height:21px;background:#e6e6e6;border:1px solid #7da2ce;"></div>
<div class="m" style="top:384px;font:11px 'Liberation Sans',sans-serif;line-height:14px;height:14px;white-space:pre;left:525px;letter-spacing:-0.055px;">0021105437002</div>
<div style="left:671px;top:356px;width:668px;height:21px;background:#e6e6e6;border:1px solid #7da2ce;"></div>
<div class="m" style="top:360px;font:11px 'Liberation Sans',sans-serif;line-height:14px;height:14px;white-space:pre;left:676px;letter-spacing:-0.031px;">Ngân hàng TMCP Quân đội  - Sở Giao Dịch 1</div>
<div style="left:671px;top:380px;width:668px;height:21px;background:#e6e6e6;border:1px solid #7da2ce;"></div>
<div class="m" style="top:384px;font:11px 'Liberation Sans',sans-serif;line-height:14px;height:14px;white-space:pre;left:676px;letter-spacing:-0.014px;">Ngân hàng TMCP Quân đội  - Sở Giao dịch 1 - KRW</div>
<div style="left:519px;top:404px;width:820px;height:21px;background:#e6e6e6;border:1px solid #7da2ce;"></div>
<div class="m" style="top:408px;font:11px 'Liberation Sans',sans-serif;line-height:14px;height:14px;white-space:pre;left:524px;letter-spacing:-0.065px;">Mua 14.000.000 tỷ giá: 23.5đ/1KRW</div>
<div class="m" style="top:360px;font:11px 'Liberation Sans',sans-serif;line-height:14px;height:14px;white-space:pre;left:1365px;letter-spacing:-0.004px;">Ngày hạch toán</div>
<div class="m" style="top:384px;font:11px 'Liberation Sans',sans-serif;line-height:14px;height:14px;white-space:pre;left:1365px;letter-spacing:-0.188px;">Ngày chứng từ</div>
<div class="m" style="top:408px;font:11px 'Liberation Sans',sans-serif;line-height:14px;height:14px;white-space:pre;left:1365px;letter-spacing:-0.293px;">Số chứng từ</div>
<div style="left:1452px;top:356px;width:105px;height:21px;background:#e6e6e6;border:1px solid #7da2ce;"></div>
<div class="m" style="top:360px;font:11px 'Liberation Sans',sans-serif;line-height:14px;height:14px;white-space:pre;left:1457px;letter-spacing:-0.106px;">28/01/2019</div>
<div style="left:1451px;top:380px;width:105px;height:21px;background:#e6e6e6;border:1px solid #7da2ce;"></div>
<div class="m" style="top:384px;font:11px 'Liberation Sans',sans-serif;line-height:14px;height:14px;white-space:pre;left:1456px;letter-spacing:-0.106px;">28/01/2019</div>
<div style="left:1451px;top:404px;width:105px;height:21px;background:#e6e6e6;border:1px solid #7da2ce;"></div>
<div class="m" style="top:408px;font:11px 'Liberation Sans',sans-serif;line-height:14px;height:14px;white-space:pre;left:1456px;letter-spacing:-0.087px;">CTNB00006A</div>
<div style="left:973px;top:485px;width:50px;height:8px;background:#adc8e7;border:1px solid #7da2ce;"></div>
<svg style="left:995px;top:487px" width="5" height="3" viewBox="0 0 5 3"><path d="M0 3L2.500 0 5 3z" fill="#fff"/></svg>
<div style="left:431px;top:501px;width:74px;height:20px;background:#ffe699;border:1px solid #7da2ce;border-bottom:0;"></div>
<div class="m" style="top:504px;font:bold 11px 'Liberation Sans',sans-serif;line-height:14px;height:14px;white-space:pre;left:442px;letter-spacing:0.317px;">1. Chi tiết</div>
<div style="left:442px;top:516px;width:7px;height:1px;background:#000;"></div>
<div class="m" style="top:499px;font:11px 'Liberation Sans',sans-serif;line-height:14px;height:14px;white-space:pre;left:1327px;letter-spacing:0.045px;">Loại tiền</div>
<div style="left:1381px;top:493px;width:59px;height:21px;background:#e6e6e6;border:1px solid #7da2ce;"></div>
<div class="m" style="top:497px;font:11px 'Liberation Sans',sans-serif;line-height:14px;height:14px;white-space:pre;left:1387px;letter-spacing:0.177px;">KRW</div>
<div class="m" style="top:498px;font:11px 'Liberation Sans',sans-serif;line-height:14px;height:14px;white-space:pre;left:1447px;letter-spacing:0.172px;">Tỷ giá</div>
<div style="left:1485px;top:493px;width:80px;height:21px;background:#e6e6e6;border:1px solid #7da2ce;"></div>
<div class="m" style="top:497px;font:11px 'Liberation Sans',sans-serif;line-height:14px;height:14px;white-space:pre;left:1522.89px;letter-spacing:-0.109px;">23,5000</div>
<div style="left:431px;top:520px;width:1134px;height:331px;background:#fff;border:1px solid #7da2ce;border-left-width:2px;"></div>
<div style="left:433px;top:521px;width:1131px;height:19px;background:#adc8e7;"></div>
<div style="left:432px;top:540px;width:1133px;height:1px;background:#7da2ce;"></div>
<div style="left:641px;top:521px;width:1px;height:20px;background:#7da2ce;"></div>
<div style="left:736px;top:521px;width:1px;height:20px;background:#7da2ce;"></div>
<div style="left:831px;top:521px;width:1px;height:20px;background:#7da2ce;"></div>
<div style="left:951px;top:521px;width:1px;height:20px;background:#7da2ce;"></div>
<div style="left:1071px;top:521px;width:1px;height:20px;background:#7da2ce;"></div>
<div style="left:1191px;top:521px;width:1px;height:20px;background:#7da2ce;"></div>
<div style="left:1311px;top:521px;width:1px;height:20px;background:#7da2ce;"></div>
<div style="left:1431px;top:521px;width:1px;height:20px;background:#7da2ce;"></div>
<div style="left:1551px;top:521px;width:1px;height:20px;background:#7da2ce;"></div>
<div style="left:1072px;top:541px;width:479px;height:274px;background:#e6e6e6;"></div>
<div class="m" style="top:524px;font:11px 'Liberation Sans',sans-serif;line-height:14px;height:14px;white-space:pre;left:509.01px;letter-spacing:0.021px;">Diễn giải</div>
<div class="m" style="top:524px;font:11px 'Liberation Sans',sans-serif;line-height:14px;height:14px;white-space:pre;left:668.37px;letter-spacing:-0.256px;">TK Nợ</div>
<div class="m" style="top:524px;font:11px 'Liberation Sans',sans-serif;line-height:14px;height:14px;white-space:pre;left:762.48px;letter-spacing:-0.037px;">TK Có</div>
<div class="m" style="top:524px;font:11px 'Liberation Sans',sans-serif;line-height:14px;height:14px;white-space:pre;left:868.98px;letter-spacing:-0.036px;">Số tiền</div>
<div class="m" style="top:524px;font:11px 'Liberation Sans',sans-serif;line-height:14px;height:14px;white-space:pre;left:986.58px;letter-spacing:0.154px;">Quy đổi</div>
<div class="m" style="top:524px;font:11px 'Liberation Sans',sans-serif;line-height:14px;height:14px;white-space:pre;left:1088.05px;letter-spacing:0.094px;">Tỷ giá xuất quỹ</div>
<div class="m" style="top:524px;font:11px 'Liberation Sans',sans-serif;line-height:14px;height:14px;white-space:pre;left:1196.54px;letter-spacing:0.094px;">Quy đổi theo TGXQ</div>
<div class="m" style="top:524px;font:11px 'Liberation Sans',sans-serif;line-height:14px;height:14px;white-space:pre;left:1338.02px;letter-spacing:0.034px;">Chênh lệch</div>
<div class="m" style="top:524px;font:11px 'Liberation Sans',sans-serif;line-height:14px;height:14px;white-space:pre;left:1437.02px;letter-spacing:0.039px;">TK xử lý chênh lệch</div>
<svg style="left:632px;top:525px" width="7" height="9" viewBox="0 0 7 9"><path d="M1.500 .5h4v4.500h-4zM.5 5.500h6M3.500 5.500v3.500" fill="none" stroke="#000"/><path d="M4.500 1v4" stroke="#000"/></svg>
<svg style="left:727px;top:525px" width="7" height="9" viewBox="0 0 7 9"><path d="M1.500 .5h4v4.500h-4zM.5 5.500h6M3.500 5.500v3.500" fill="none" stroke="#000"/><path d="M4.500 1v4" stroke="#000"/></svg>
<svg style="left:822px;top:525px" width="7" height="9" viewBox="0 0 7 9"><path d="M1.500 .5h4v4.500h-4zM.5 5.500h6M3.500 5.500v3.500" fill="none" stroke="#000"/><path d="M4.500 1v4" stroke="#000"/></svg>
<svg style="left:941px;top:527px" width="9" height="7" viewBox="0 0 9 7"><path d="M3.500 1.500h5v4h-5zM3.500 .5v6M0 3.500h3.500" fill="none" stroke="#000"/><path d="M4 5h4.500" stroke="#000"/></svg>
<svg style="left:1061px;top:527px" width="9" height="7" viewBox="0 0 9 7"><path d="M3.500 1.500h5v4h-5zM3.500 .5v6M0 3.500h3.500" fill="none" stroke="#000"/><path d="M4 5h4.500" stroke="#000"/></svg>
<svg style="left:1181px;top:527px" width="9" height="7" viewBox="0 0 9 7"><path d="M3.500 1.500h5v4h-5zM3.500 .5v6M0 3.500h3.500" fill="none" stroke="#000"/><path d="M4 5h4.500" stroke="#000"/></svg>
<svg style="left:1301px;top:527px" width="9" height="7" viewBox="0 0 9 7"><path d="M3.500 1.500h5v4h-5zM3.500 .5v6M0 3.500h3.500" fill="none" stroke="#000"/><path d="M4 5h4.500" stroke="#000"/></svg>
<svg style="left:1421px;top:527px" width="9" height="7" viewBox="0 0 9 7"><path d="M3.500 1.500h5v4h-5zM3.500 .5v6M0 3.500h3.500" fill="none" stroke="#000"/><path d="M4 5h4.500" stroke="#000"/></svg>
<svg style="left:1541px;top:527px" width="9" height="7" viewBox="0 0 9 7"><path d="M3.500 1.500h5v4h-5zM3.500 .5v6M0 3.500h3.500" fill="none" stroke="#000"/><path d="M4 5h4.500" stroke="#000"/></svg>
<div class="hl" style="left:433px;top:560px;width:1118px;background-position:1px 0"></div>
<div class="hl" style="left:1552px;top:560px;width:12px;background-position:0px 0"></div>
<div class="hl" style="left:433px;top:580px;width:1118px;background-position:1px 0"></div>
<div class="hl" style="left:1552px;top:580px;width:12px;background-position:0px 0"></div>
<div class="hl" style="left:433px;top:600px;width:1118px;background-position:1px 0"></div>
<div class="hl" style="left:1552px;top:600px;width:12px;background-position:0px 0"></div>
<div class="hl" style="left:433px;top:620px;width:1118px;background-position:1px 0"></div>
<div class="hl" style="left:1552px;top:620px;width:12px;background-position:0px 0"></div>
<div class="hl" style="left:433px;top:640px;width:1118px;background-position:1px 0"></div>
<div class="hl" style="left:1552px;top:640px;width:12px;background-position:0px 0"></div>
<div class="hl" style="left:433px;top:660px;width:1118px;background-position:1px 0"></div>
<div class="hl" style="left:1552px;top:660px;width:12px;background-position:0px 0"></div>
<div class="hl" style="left:433px;top:680px;width:1118px;background-position:1px 0"></div>
<div class="hl" style="left:1552px;top:680px;width:12px;background-position:0px 0"></div>
<div class="hl" style="left:433px;top:700px;width:1118px;background-position:1px 0"></div>
<div class="hl" style="left:1552px;top:700px;width:12px;background-position:0px 0"></div>
<div class="hl" style="left:433px;top:720px;width:1118px;background-position:1px 0"></div>
<div class="hl" style="left:1552px;top:720px;width:12px;background-position:0px 0"></div>
<div class="hl" style="left:433px;top:740px;width:1118px;background-position:1px 0"></div>
<div class="hl" style="left:1552px;top:740px;width:12px;background-position:0px 0"></div>
<div class="hl" style="left:433px;top:760px;width:1118px;background-position:1px 0"></div>
<div class="hl" style="left:1552px;top:760px;width:12px;background-position:0px 0"></div>
<div class="hl" style="left:433px;top:780px;width:1118px;background-position:1px 0"></div>
<div class="hl" style="left:1552px;top:780px;width:12px;background-position:0px 0"></div>
<div class="hl" style="left:433px;top:800px;width:1118px;background-position:1px 0"></div>
<div class="hl" style="left:1552px;top:800px;width:12px;background-position:0px 0"></div>
<div class="vl" style="left:641px;top:541px;height:274px;background-position:0 0px"></div>
<div class="vl" style="left:736px;top:541px;height:274px;background-position:0 0px"></div>
<div style="left:831px;top:541px;width:1px;height:274px;background:#808080;"></div>
<div class="vl" style="left:951px;top:541px;height:274px;background-position:0 0px"></div>
<div class="vl" style="left:1071px;top:541px;height:274px;background-position:0 0px"></div>
<div class="vl" style="left:1191px;top:541px;height:274px;background-position:0 0px"></div>
<div class="vl" style="left:1311px;top:541px;height:274px;background-position:0 0px"></div>
<div class="vl" style="left:1431px;top:541px;height:274px;background-position:0 0px"></div>
<div class="vl" style="left:1551px;top:541px;height:274px;background-position:0 0px"></div>
<div class="m" style="top:544px;font:11px 'Liberation Sans',sans-serif;line-height:14px;height:14px;white-space:pre;left:438px;letter-spacing:-0.065px;">Mua 14.000.000 tỷ giá: 23.5đ/1KRW</div>
<div class="m" style="top:544px;font:11px 'Liberation Sans',sans-serif;line-height:14px;height:14px;white-space:pre;left:647px;letter-spacing:0.086px;">1122</div>
<div class="m" style="top:544px;font:11px 'Liberation Sans',sans-serif;line-height:14px;height:14px;white-space:pre;left:742px;letter-spacing:0.086px;">1121</div>
<div class="m" style="top:544px;font:11px 'Liberation Sans',sans-serif;line-height:14px;height:14px;white-space:pre;left:873.36px;letter-spacing:-0.141px;">14.000.000,000</div>
<div class="m" style="top:544px;font:11px 'Liberation Sans',sans-serif;line-height:14px;height:14px;white-space:pre;left:1007.90px;letter-spacing:-0.107px;">329.000.000</div>
<div class="m" style="top:544px;font:11px 'Liberation Sans',sans-serif;line-height:14px;height:14px;white-space:pre;left:1155.47px;letter-spacing:-0.026px;">0,0000</div>
<div class="m" style="top:544px;font:11px 'Liberation Sans',sans-serif;line-height:14px;height:14px;white-space:pre;left:1301.88px;">0</div>
<div class="m" style="top:544px;font:11px 'Liberation Sans',sans-serif;line-height:14px;height:14px;white-space:pre;left:1421.88px;">0</div>
<div style="left:433px;top:815px;width:1131px;height:18px;background:#f0f0f0;border-top:1px solid #7da2ce;border-bottom:1px solid #7da2ce;"></div>
<div style="left:433px;top:816px;width:208px;height:16px;background:#d6d6d6;"></div>
<div style="left:832px;top:816px;width:119px;height:16px;background:#d6d6d6;"></div>
<div style="left:952px;top:816px;width:119px;height:16px;background:#d6d6d6;"></div>
<div style="left:1192px;top:816px;width:119px;height:16px;background:#d6d6d6;"></div>
<div style="left:1312px;top:816px;width:119px;height:16px;background:#d6d6d6;"></div>
<div style="left:641px;top:816px;width:1px;height:16px;background:#7da2ce;"></div>
<div style="left:831px;top:816px;width:1px;height:16px;background:#7da2ce;"></div>
<div style="left:951px;top:816px;width:1px;height:16px;background:#7da2ce;"></div>
<div style="left:1071px;top:816px;width:1px;height:16px;background:#7da2ce;"></div>
<div style="left:1191px;top:816px;width:1px;height:16px;background:#7da2ce;"></div>
<div style="left:1311px;top:816px;width:1px;height:16px;background:#7da2ce;"></div>
<div style="left:1431px;top:816px;width:1px;height:16px;background:#7da2ce;"></div>
<div class="m" style="top:817px;font:11px 'Liberation Sans',sans-serif;line-height:14px;height:14px;white-space:pre;left:436px;letter-spacing:-0.195px;">Số dòng = 1</div>
<div class="m" style="top:817px;font:11px 'Liberation Sans',sans-serif;line-height:14px;height:14px;white-space:pre;left:873.36px;letter-spacing:-0.141px;">14.000.000,000</div>
<div class="m" style="top:817px;font:11px 'Liberation Sans',sans-serif;line-height:14px;height:14px;white-space:pre;left:1007.90px;letter-spacing:-0.107px;">329.000.000</div>
<div class="m" style="top:817px;font:11px 'Liberation Sans',sans-serif;line-height:14px;height:14px;white-space:pre;left:1301.88px;">0</div>
<div class="m" style="top:817px;font:11px 'Liberation Sans',sans-serif;line-height:14px;height:14px;white-space:pre;left:1421.88px;">0</div>
<div style="left:433px;top:833px;width:1131px;height:17px;background:#adc8e7;"></div>
<div style="left:1411px;top:833px;width:136px;height:17px;background:#d6d6d6;"></div>
<svg style="left:438px;top:838px" width="4" height="7" viewBox="0 0 4 7"><path d="M4 0v7L0 3.500z" fill="#000"/></svg>
<svg style="left:1554px;top:838px" width="4" height="7" viewBox="0 0 4 7"><path d="M0 0v7l4-3.500z" fill="#000"/></svg>
<div style="left:423px;top:858px;width:1150px;height:23px;background:#adc8e7;"></div>
<svg style="left:1562px;top:870px" width="12" height="12" viewBox="0 0 12 12"><g fill="#dce8f8"><rect x="9" y="9" width="2" height="2"/><rect x="9" y="5" width="2" height="2"/><rect x="9" y="1" width="2" height="2"/><rect x="5" y="9" width="2" height="2"/><rect x="5" y="5" width="2" height="2"/><rect x="1" y="9" width="2" height="2"/></g><g fill="#223a6a"><rect x="8" y="8" width="2" height="2"/><rect x="8" y="4" width="2" height="2"/><rect x="8" y="0" width="2" height="2"/><rect x="4" y="8" width="2" height="2"/><rect x="4" y="4" width="2" height="2"/><rect x="0" y="8" width="2" height="2"/></g></svg>
<div style="left:0px;top:1040px;width:1920px;height:40px;background:linear-gradient(to right,#1f3843 0,#1f3642 50%,#1e2d42 74%,#1c2744 100%);"></div>
<svg style="left:16px;top:1052px" width="17" height="17" viewBox="0 0 17 17"><path d="M0 2.400L7 1.400V8H0zM8 1.200L17 0v8H8zM0 9h7v6.600L0 14.600zM8 9h9v8l-9-1.200z" fill="#fff"/></svg>
<div style="left:48px;top:1040px;width:344px;height:40px;background:#f2f2f2;border-top:1px solid #fbfbfb;"></div>
<svg style="left:59px;top:1051px" width="18" height="18" viewBox="0 0 18 18"><circle cx="11" cy="6.500" r="5" fill="none" stroke="#222" stroke-width="1.300"/><path d="M7.400 10.200L1 16.600" stroke="#222" stroke-width="1.400"/></svg>
<div style="top:1051px;font:15px 'Liberation Sans',sans-serif;line-height:20px;height:20px;white-space:pre;left:88px;letter-spacing:-0.241px;color:#2b2b2b;">Type here to search</div>
<div style="top:1052px;font:12.5px 'Liberation Sans',sans-serif;line-height:16px;height:16px;white-space:pre;left:1409px;letter-spacing:-0.551px;color:#fff;">Address</div>
<div style="left:1456px;top:1045px;width:232px;height:30px;background:#121c30;"></div>
<div style="left:1457px;top:1046px;width:230px;height:28px;background:#fff;"></div>
<div style="left:1657px;top:1046px;width:1px;height:28px;background:#d4d4d4;"></div>
<svg style="left:1637px;top:1057px" width="10" height="6" viewBox="0 0 10 6"><path d="M.5 .5L5 5 9.500 .5" fill="none" stroke="#444" stroke-width="1.100"/></svg>
<svg style="left:1667px;top:1054px" width="12" height="13" viewBox="0 0 12 13"><path d="M8.300 2.900A4.600 4.600 0 1 0 10.600 7" fill="none" stroke="#7a7a7a" stroke-width="1.300"/><path d="M4.800 1.300h3.600v3.600" fill="none" stroke="#7a7a7a" stroke-width="1.300"/></svg>
<svg style="left:1695px;top:1056px" width="12" height="7" viewBox="0 0 12 7"><path d="M.7 6.300L6 1l5.300 5.300" fill="none" stroke="#fff" stroke-width="1.200"/></svg>
<svg style="left:1717px;top:1053px" width="17" height="15" viewBox="0 0 17 15"><path d="M4.500 1.500h11v8h-11zM5.500 13.500h7M10 9.500v4" fill="none" stroke="#fff" stroke-width="1.100"/><path d="M.5 1.500h4v4h-4zM2.500 5.500v8.500" fill="none" stroke="#fff" stroke-width="1"/><path d="M1.500 3l1 1 1-1" fill="none" stroke="#fff" stroke-width=".8"/></svg>
<svg style="left:1741px;top:1053px" width="17" height="14" viewBox="0 0 17 14"><path d="M.5 4.500h2.500l3.500-3.500v12L3 9.500H.5z" fill="none" stroke="#fff" stroke-width="1"/><path d="M9 4.800a3.300 3.300 0 0 1 0 4.400M11 2.800a6 6 0 0 1 0 8.400M13.200 .8a8.800 8.800 0 0 1 0 12.400" fill="none" stroke="#fff" stroke-width="1"/></svg>
<div style="top:1052px;font:12.5px 'Liberation Sans',sans-serif;line-height:16px;height:16px;white-space:pre;left:1767px;letter-spacing:-1.365px;color:#fff;">ENG</div>
<div style="top:1043px;font:12.5px 'Liberation Sans',sans-serif;line-height:16px;height:16px;white-space:pre;left:1818.07px;letter-spacing:-0.856px;color:#fff;">14:17</div>
<div style="top:1061px;font:12.5px 'Liberation Sans',sans-serif;line-height:16px;height:16px;white-space:pre;left:1802.32px;letter-spacing:-0.356px;color:#fff;">23/03/2020</div>
<svg style="left:1879px;top:1052px" width="16" height="16" viewBox="0 0 16 16"><path d="M0 0h16v13H9l-3 3v-3H0z" fill="#fff"/><path d="M3 3.500h10M3 6.500h10M3 9.500h10" stroke="#1c2744" stroke-width="1"/></svg>
<div style="left:1886px;top:1059px;width:18px;height:18px;background:#2a2c36;border-radius:9px;border:1px solid #80828e;"></div>
<div class="m" style="top:1061px;font:bold 11px 'Liberation Sans',sans-serif;line-height:14px;height:14px;white-space:pre;left:1888.44px;letter-spacing:-0.125px;color:#fff;">21</div>
<div style="left:1915px;top:1040px;width:1px;height:40px;background:#7f8594;"></div>
<svg style="left:407px;top:1051px" width="18" height="16" viewBox="0 0 18 16"><path d="M1.500 4.500h10v8h-10z" fill="none" stroke="#fff" stroke-width="1.200"/><path d="M1 1.500h11M1 15.200h11" fill="none" stroke="#fff" stroke-width="1.100"/><path d="M15.500 1v14.500" stroke="#fff" stroke-width="1"/><rect x="14.500" y="5" width="2" height="2.500" fill="#fff"/></svg>
<svg style="left:457px;top:1049px" width="22" height="22" viewBox="0 0 22 22"><path d="M1 10C2 4 6 1 11 1c6 0 10 4 10 10v2H8c0 3 3 4.500 6 4.500 2 0 4-.5 6-1.500v4c-2 1-4 1.500-7 1.500-6 0-9-4-9-8 0-3 2-6 5-7.500C6 6 4 8 3.500 10zM8 9.500h7C15 7 13.500 5.500 11.500 5.500S8 7 8 9.500z" fill="#0a78d8"/></svg>
<svg style="left:503px;top:1047px" width="26" height="26" viewBox="0 0 26 26"><ellipse cx="16" cy="18" rx="7" ry="6" fill="#d83c96"/><ellipse cx="17.500" cy="13" rx="6.500" ry="5.500" fill="#5c8ce4"/><ellipse cx="12.500" cy="14.500" rx="4" ry="4.500" fill="#f0d890"/><circle cx="8.500" cy="9.500" r="4.500" fill="#b0b0b0"/><path d="M4 1.500c3-.8 6 0 8 1.500L10 8 6 9z" fill="#6c6c6c"/><path d="M7 3c1.500 0 3 .5 4 1.500l-1 3z" fill="#d8d8d8"/><path d="M3 11.500c2-.8 5-.5 6.500 1-.5 2-3 3-5.500 2.500C3 14.500 2.500 13 3 11.500z" fill="#e8781c"/><circle cx="8" cy="12.500" r="1" fill="#3c2a1a"/></svg>
<svg style="left:553px;top:1050px" width="24" height="20" viewBox="0 0 24 20"><path d="M1 1.500h7.500l2 2.500H23v15H1z" fill="#f4bc38"/><path d="M1 5.500h22v13.500H1z" fill="#fcd864"/><path d="M5.500 12h13v7h-13z" fill="#3c94e4"/><path d="M9 15.500h6v3.500H9z" fill="#fcd864"/></svg>
<svg style="left:601px;top:1047px" width="25" height="25" viewBox="0 0 25 25"><path d="M9 7V5a3.500 3.500 0 0 1 7 0v2" fill="none" stroke="#fff" stroke-width="1.300"/><path d="M1 6.500h23v16a1.500 1.500 0 0 1-1.500 1.500h-20A1.500 1.500 0 0 1 1 22.500z" fill="#fff"/><rect x="7.500" y="10" width="4.500" height="4.500" fill="#f25022"/><rect x="13" y="10" width="4.500" height="4.500" fill="#7fba00"/><rect x="7.500" y="15.500" width="4.500" height="4.500" fill="#00a4ef"/><rect x="13" y="15.500" width="4.500" height="4.500" fill="#ffb900"/></svg>
<svg style="left:650px;top:1048px" width="26" height="23" viewBox="0 0 26 23"><path d="M1 9l12-8 12 8z" fill="#0c5cb4"/><path d="M3.500 7h19v10h-19z" fill="#fff"/><path d="M1 9l12 8 12-8v13H1z" fill="#2a98ec"/><path d="M1 22l12-9 12 9z" fill="#1a84dc"/></svg>
<div style="left:666px;top:1058px;width:20px;height:19px;background:#2a2c30;border-radius:10px;border:1px solid #9a9ca4;"></div>
<div class="m" style="top:1061px;font:bold 11px 'Liberation Sans',sans-serif;line-height:14px;height:14px;white-space:pre;left:669.81px;letter-spacing:0.125px;color:#fff;">20</div>
<svg style="left:699px;top:1048px" width="24" height="23" viewBox="0 0 24 23"><defs><linearGradient id="xlg" x1="0" y1="0" x2="1" y2="1"><stop offset="0" stop-color="#d8ecc8"/><stop offset="1" stop-color="#7cb868"/></linearGradient></defs><path d="M2 1h19v20H2z" fill="url(#xlg)" stroke="#8cc07c"/><path d="M4 3.500h4.500L11 8l3-4.500h4.500l-5 7.500 5 7.500H14l-3-4.500-3 4.500H3.500l5.200-7.500z" fill="#2c8c34"/><path d="M9 13.500l13-2 1.500 7.500-13 2.500z" fill="#fff" stroke="#7cb868" stroke-width=".7"/><path d="M10 16l12-2M10.500 18.500l12-2.200M14.500 13l1.300 7.500" stroke="#8cc07c" stroke-width=".7"/></svg>
<div style="left:691px;top:1077px;width:32px;height:3px;background:#76b9ed;"></div>
<div style="left:724px;top:1077px;width:8px;height:3px;background:#5c8cbc;"></div>
<div style="left:737px;top:1040px;width:45px;height:37px;background:linear-gradient(to right,#46586a,#4c5f70);"></div>
<div style="left:782px;top:1040px;width:3px;height:40px;background:#314250;"></div>
<div style="left:737px;top:1077px;width:48px;height:3px;background:#76b9ed;"></div>
<svg style="left:749px;top:1048px" width="24" height="24" viewBox="0 0 24 24"><defs><clipPath id="pwc"><circle cx="12" cy="12" r="11.800"/></clipPath></defs><g clip-path="url(#pwc)"><rect width="24" height="24" fill="#2c9c54"/><path d="M12 12C6 12 2 8 1 2l11-3c4 3 4 9 0 13z" fill="#e8202c"/><path d="M12 12c0-6 4-10 10-11l3 10c-3 4-9 5-13 1z" fill="#fcb414"/><path d="M12 12c6 0 10 4 11 10l-11 3c-4-3-4-9 0-13z" fill="#1c9cf0"/><path d="M12 12c0 6-4 10-10 11L-1 13c3-4 9-5 13-1z" fill="#2cac5c"/></g><path d="M12 9l.9 2.100L15 12l-2.100.9L12 15l-.9-2.100L9 12l2.100-.9z" fill="#fff"/></svg>
<svg style="left:798px;top:1048px" width="24" height="24" viewBox="0 0 24 24"><circle cx="12" cy="12" r="11.500" fill="#e8382a"/><path d="M12 12L2 6.200a11.500 11.500 0 0 0 8.500 17.200z" fill="#2aa84a"/><path d="M12 12l-1.500 11.400A11.500 11.500 0 0 0 22 6.200z" fill="#f8c824"/><path d="M2 6.200a11.500 11.500 0 0 1 20 0H12z" fill="#e0402c"/><circle cx="12" cy="12" r="5.300" fill="#fff"/><circle cx="12" cy="12" r="4.200" fill="#4a8af0"/></svg>
<div style="left:790px;top:1077px;width:40px;height:3px;background:#76b9ed;"></div>
<svg style="left:848px;top:1049px" width="21" height="20" viewBox="0 0 21 20"><defs><linearGradient id="acg" x1="0" y1="0" x2="0" y2="1"><stop offset="0" stop-color="#d40c0c"/><stop offset="1" stop-color="#8c0404"/></linearGradient></defs><rect width="21" height="20" fill="url(#acg)"/><path d="M4.500 15.500c2-1 4-3.500 5.500-7.500.8-2.500.3-4.500-.6-4s-.4 4 2.600 7 5.500 2.500 5.500 1.500-3.500-1.500-7 0-6 3-6 3z" fill="none" stroke="#fff" stroke-width="1.100"/></svg>
<div style="left:839px;top:1077px;width:40px;height:3px;background:#76b9ed;"></div>
<svg style="left:895px;top:1047px" width="26" height="26" viewBox="0 0 26 26"><path d="M3 23.500l-1.500 1.500 5.500-1z" fill="#1a8af0"/><rect x="1.500" y="1" width="23.500" height="22.500" rx="9" fill="#fff" stroke="#1a8af0" stroke-width=".6"/></svg>
<div style="top:1053px;font:bold 9px 'Liberation Sans',sans-serif;line-height:12px;height:12px;white-space:pre;left:899.44px;letter-spacing:-0.129px;color:#1a7ae8;">Zalo</div>
<div style="left:888px;top:1077px;width:40px;height:3px;background:#76b9ed;"></div>
<svg style="left:945px;top:1048px" width="24" height="24" viewBox="0 0 24 24"><circle cx="12" cy="12" r="11.800" fill="#2c78d0"/><rect x="6.500" y="7" width="11.500" height="8" fill="#2c78d0" stroke="#fff" stroke-width="1.200"/><path d="M7 14.500V7.500h10.500z" fill="#fff"/><path d="M9 18h6.500M12.200 15v3" stroke="#fff" stroke-width="1.400"/></svg>
<div style="left:937px;top:1077px;width:40px;height:3px;background:#76b9ed;"></div>
</body></html>
